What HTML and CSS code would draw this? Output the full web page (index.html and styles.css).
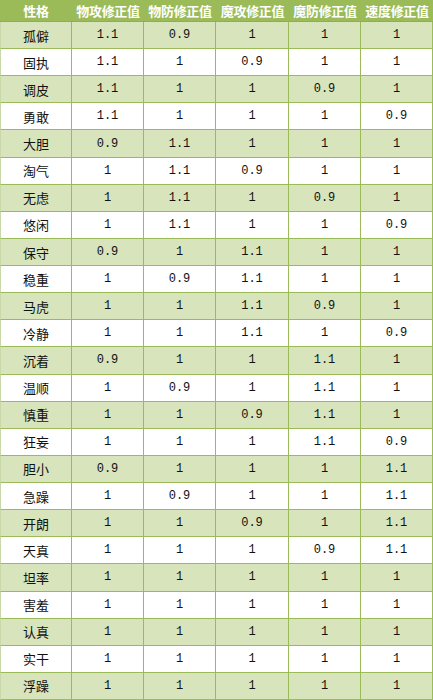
FILE: index.html
```html
<!DOCTYPE html>
<html lang="zh">
<head>
<meta charset="utf-8">
<title>性格修正值</title>
<link rel="stylesheet" href="styles.css">
</head>
<body>
<div class="table">
  <div class="h">性格</div><div class="h">物攻修正值</div><div class="h">物防修正值</div><div class="h">魔攻修正值</div><div class="h">魔防修正值</div><div class="h">速度修正值</div>
  <div class="c n g">孤僻</div><div class="c g">1.1</div><div class="c g">0.9</div><div class="c g">1</div><div class="c g">1</div><div class="c g">1</div>
  <div class="c n">固执</div><div class="c">1.1</div><div class="c">1</div><div class="c">0.9</div><div class="c">1</div><div class="c">1</div>
  <div class="c n g">调皮</div><div class="c g">1.1</div><div class="c g">1</div><div class="c g">1</div><div class="c g">0.9</div><div class="c g">1</div>
  <div class="c n">勇敢</div><div class="c">1.1</div><div class="c">1</div><div class="c">1</div><div class="c">1</div><div class="c">0.9</div>
  <div class="c n g">大胆</div><div class="c g">0.9</div><div class="c g">1.1</div><div class="c g">1</div><div class="c g">1</div><div class="c g">1</div>
  <div class="c n">淘气</div><div class="c">1</div><div class="c">1.1</div><div class="c">0.9</div><div class="c">1</div><div class="c">1</div>
  <div class="c n g">无虑</div><div class="c g">1</div><div class="c g">1.1</div><div class="c g">1</div><div class="c g">0.9</div><div class="c g">1</div>
  <div class="c n">悠闲</div><div class="c">1</div><div class="c">1.1</div><div class="c">1</div><div class="c">1</div><div class="c">0.9</div>
  <div class="c n g">保守</div><div class="c g">0.9</div><div class="c g">1</div><div class="c g">1.1</div><div class="c g">1</div><div class="c g">1</div>
  <div class="c n">稳重</div><div class="c">1</div><div class="c">0.9</div><div class="c">1.1</div><div class="c">1</div><div class="c">1</div>
  <div class="c n g">马虎</div><div class="c g">1</div><div class="c g">1</div><div class="c g">1.1</div><div class="c g">0.9</div><div class="c g">1</div>
  <div class="c n">冷静</div><div class="c">1</div><div class="c">1</div><div class="c">1.1</div><div class="c">1</div><div class="c">0.9</div>
  <div class="c n g">沉着</div><div class="c g">0.9</div><div class="c g">1</div><div class="c g">1</div><div class="c g">1.1</div><div class="c g">1</div>
  <div class="c n">温顺</div><div class="c">1</div><div class="c">0.9</div><div class="c">1</div><div class="c">1.1</div><div class="c">1</div>
  <div class="c n g">慎重</div><div class="c g">1</div><div class="c g">1</div><div class="c g">0.9</div><div class="c g">1.1</div><div class="c g">1</div>
  <div class="c n">狂妄</div><div class="c">1</div><div class="c">1</div><div class="c">1</div><div class="c">1.1</div><div class="c">0.9</div>
  <div class="c n g">胆小</div><div class="c g">0.9</div><div class="c g">1</div><div class="c g">1</div><div class="c g">1</div><div class="c g">1.1</div>
  <div class="c n">急躁</div><div class="c">1</div><div class="c">0.9</div><div class="c">1</div><div class="c">1</div><div class="c">1.1</div>
  <div class="c n g">开朗</div><div class="c g">1</div><div class="c g">1</div><div class="c g">0.9</div><div class="c g">1</div><div class="c g">1.1</div>
  <div class="c n">天真</div><div class="c">1</div><div class="c">1</div><div class="c">1</div><div class="c">0.9</div><div class="c">1.1</div>
  <div class="c n g">坦率</div><div class="c g">1</div><div class="c g">1</div><div class="c g">1</div><div class="c g">1</div><div class="c g">1</div>
  <div class="c n">害羞</div><div class="c">1</div><div class="c">1</div><div class="c">1</div><div class="c">1</div><div class="c">1</div>
  <div class="c n g">认真</div><div class="c g">1</div><div class="c g">1</div><div class="c g">1</div><div class="c g">1</div><div class="c g">1</div>
  <div class="c n">实干</div><div class="c">1</div><div class="c">1</div><div class="c">1</div><div class="c">1</div><div class="c">1</div>
  <div class="c n g">浮躁</div><div class="c g">1</div><div class="c g">1</div><div class="c g">1</div><div class="c g">1</div><div class="c g">1</div>
</div>
</body>
</html>
```

FILE: styles.css
```css
html, body {
  margin: 0;
  padding: 0;
  background: #ffffff;
}
.table {
  width: 433px;
  height: 700px;
  display: grid;
  grid-template-columns: 72px 72px 72px 73px 72px 72px;
  grid-template-rows: 22px repeat(25, 1fr);
  overflow: hidden;
}
.h {
  background: #9bbb59;
  color: #ffffff;
  font-family: "Noto Sans CJK SC", sans-serif;
  font-weight: bold;
  font-size: 13px;
  display: flex;
  align-items: center;
  justify-content: center;
  border-bottom: 1px solid #8fae4e;
  white-space: nowrap;
  letter-spacing: -0.3px;
}
.c {
  display: flex;
  align-items: center;
  justify-content: center;
  font-family: "Liberation Mono", monospace;
  font-size: 12px;
  color: #111111;
  border-right: 1px solid #9bbb59;
  border-bottom: 1px solid #9bbb59;
  background: #ffffff;
}
.c.g {
  background: #d7e4bc;
}
.c.n {
  font-family: "Noto Sans CJK SC", sans-serif;
  font-size: 13px;
  border-left: 1px solid #c9d8a8;
}
```
